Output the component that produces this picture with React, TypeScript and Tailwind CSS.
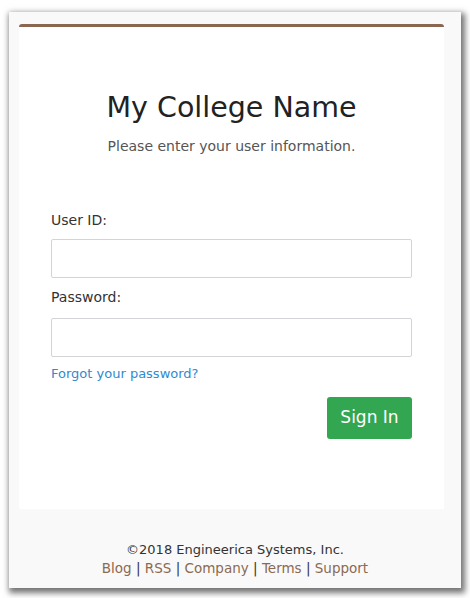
export default function App() {
  return (
    <div className="h-[598px] w-[470px] bg-white pl-[9px] pt-[12px] font-['DejaVu_Sans',Verdana,sans-serif]">
      <div className="flex h-[576px] w-[452px] flex-col bg-[#f9f9f9] shadow-[2px_3px_6px_2px_rgba(0,0,0,0.55)]">
        <div className="ml-[10px] mt-[12px] h-[485px] w-[425px] rounded-t-[3px] border-t-[3px] border-[#8b6650] bg-white px-[32px]">
          <h1 className="mt-[63px] text-center text-[28.5px] leading-[36px] text-[#222]">My College Name</h1>
          <p className="mt-[10px] text-center text-[14px] text-[#555]">Please enter your user information.</p>

          <label className="mt-[53px] block text-[14px] text-[#333]">User ID:</label>
          <input className="mt-[8px] block h-[39px] w-[361px] rounded-[2px] border border-[#d4d4d8] px-2 outline-none" />

          <label className="mt-[9px] block text-[14px] text-[#333]">Password:</label>
          <input type="password" className="mt-[10px] block h-[39px] w-[361px] rounded-[2px] border border-[#d4d4d8] px-2 outline-none" />

          <a href="#" className="mt-[7px] block text-[13px] text-[#2f8ad0]">Forgot your password?</a>

          <div className="mt-[13px] flex w-[361px] justify-end">
            <button className="h-[42px] w-[85px] rounded-[3px] bg-[#33a652] text-[17px] text-white">Sign In</button>
          </div>
        </div>

        <div className="mt-[32px] text-center text-[13px] leading-[18px]">
          <div className="text-[#333]">©2018 Engineerica Systems, Inc.</div>
          <div className="text-[13.5px] text-[#333]">
            <a href="#" className="text-[#8b6a50]">Blog</a> | <a href="#" className="text-[#8b6a50]">RSS</a> |{' '}
            <a href="#" className="text-[#8b6a50]">Company</a> | <a href="#" className="text-[#8b6a50]">Terms</a> |{' '}
            <a href="#" className="text-[#8b6a50]">Support</a>
          </div>
        </div>
      </div>
    </div>
  );
}
